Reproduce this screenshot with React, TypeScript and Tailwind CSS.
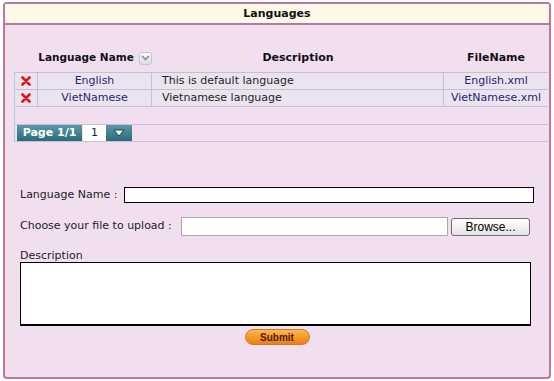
import React from "react";

const font = { fontFamily: '"DejaVu Sans", Verdana, sans-serif' };

function XIcon() {
  return (
    <svg width="10" height="10" viewBox="0 0 10 10">
      <path d="M1.5 1.5 L8.5 8.5 M8.5 1.5 L1.5 8.5" stroke="#d81818" strokeWidth="2.6" strokeLinecap="round" />
    </svg>
  );
}

function SortIcon() {
  return (
    <span className="ml-[5px] inline-flex h-[13px] w-[13px] shrink-0 items-center justify-center rounded-[3px] border border-[#c8c4cc] bg-gradient-to-b from-[#fafafa] to-[#dcdcdc]">
      <svg width="9" height="6" viewBox="0 0 9 6">
        <path d="M1 1 L4.5 4.5 L8 1" stroke="#8a8a9a" strokeWidth="1.6" fill="none" />
      </svg>
    </span>
  );
}

const rows = [
  { name: "English", desc: "This is default language", file: "English.xml" },
  { name: "VietNamese", desc: "Vietnamese language", file: "VietNamese.xml" },
];

export default function App() {
  return (
    <div className="w-[554px] h-[381px] bg-white pt-[2px] pl-[3px]" style={font}>
      <div className="flex h-[377px] w-[548px] flex-col rounded-[4px] border-2 border-[#b8789f] bg-[#f1dff0] text-[11px] text-[#222]">
        <div className="flex h-[21px] shrink-0 items-center justify-center border-b-2 border-[#b8789f] bg-[#fdf8e7] pt-[2px] font-bold text-[#111]">
          Languages
        </div>
        <div className="ml-[9px] mt-[23px] grid h-[20px] grid-cols-[24px_114px_292px_104px] items-center font-bold text-[#111]">
          <div />
          <div className="flex items-center justify-center whitespace-nowrap text-[10.5px]">
            Language Name
            <SortIcon />
          </div>
          <div className="text-center">Description</div>
          <div className="text-center">FileName</div>
        </div>
        <div className="ml-[9px] mt-[4px] w-[534px] border-l border-t border-[#c6c0d6]">
          {rows.map((r) => (
            <div key={r.name} className="grid h-[17px] grid-cols-[23px_114px_292px_104px] border-b border-[#c6c0d6] bg-[#ebe4f0]">
              <div className="flex items-center justify-center border-r border-[#c6c0d6]">
                <XIcon />
              </div>
              <div className="flex items-center justify-center border-r border-[#c6c0d6] text-[#25256e]">{r.name}</div>
              <div className="flex items-center border-r border-[#c6c0d6] pl-[10px] text-[#1e1e1e]">{r.desc}</div>
              <div className="flex items-center justify-center text-[#25256e]">{r.file}</div>
            </div>
          ))}
          <div className="h-[18px] border-b border-[#c6c0d6]" />
          <div className="flex h-[17px] items-stretch border-b border-[#c6c0d6] pl-[2px]">
            <div className="flex w-[65px] items-center justify-center bg-gradient-to-b from-[#5a9aa8] to-[#2c6a7a] font-bold text-white">
              Page 1/1
            </div>
            <div className="ml-[1px] flex w-[23px] items-center justify-center bg-white text-[#222]">1</div>
            <div className="flex w-[26px] items-center justify-center bg-gradient-to-b from-[#5a9aa8] to-[#2c6a7a]">
              <svg width="12" height="8" viewBox="0 0 12 8">
                <path d="M1 1 L11 1 L6 7 Z" fill="white" stroke="#1c3c48" strokeWidth="1" />
              </svg>
            </div>
          </div>
        </div>

        <div className="ml-[15px] mt-[45px] flex h-[16px] items-center">
          <span className="w-[104px]">Language Name :</span>
          <div className="h-[16px] w-[410px] border border-black bg-white" />
        </div>
        <div className="ml-[15px] mt-[14px] flex h-[19px] items-center">
          <span className="w-[161px]">Choose your file to upload :</span>
          <div className="h-[19px] w-[267px] border border-[#a8a8a8] bg-white" />
          <div
            className="ml-[3px] flex h-[18px] w-[79px] items-center justify-center rounded-[3px] border border-[#6e6e6e] bg-gradient-to-b from-white to-[#e4e4e4] text-[12px] text-black"
            style={{ fontFamily: '"Liberation Sans", Arial, sans-serif' }}
          >
            Browse...
          </div>
        </div>
        <div className="ml-[15px] mt-[13px] h-[13px] leading-[13px]">Description</div>
        <div className="ml-[15px] h-[64px] w-[511px] border border-black border-b-2 bg-white" />
        <div className="mt-[3px] flex justify-center">
          <div
            className="flex h-[16px] w-[65px] items-center justify-center rounded-full border border-[#d07a20] bg-gradient-to-b from-[#fbb850] via-[#f59a28] to-[#e8801a] text-[10px] font-bold text-[#5a1a08]"
            style={{ fontFamily: '"Liberation Sans", Arial, sans-serif' }}
          >
            Submit
          </div>
        </div>
      </div>
    </div>
  );
}
